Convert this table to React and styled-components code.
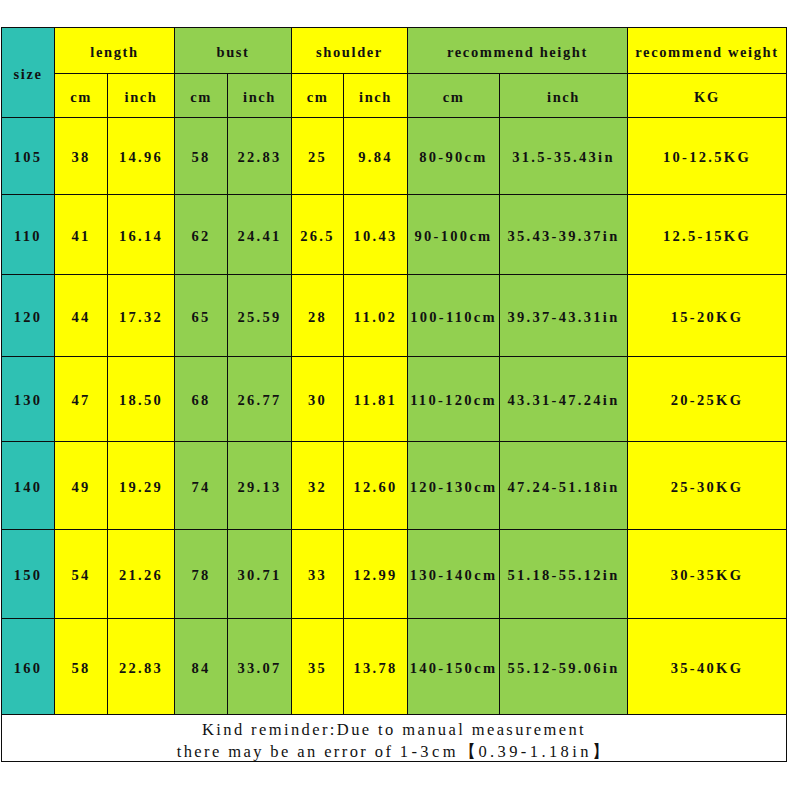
import React from 'react'
import styled, { createGlobalStyle } from 'styled-components'

const GlobalStyle = createGlobalStyle`
  html, body {
    margin: 0;
    padding: 0;
    background: #ffffff;
  }
`

const colors = {
  teal: '#2fc1b3',
  yellow: '#ffff00',
  green: '#92d050',
}

const Page = styled.div`
  width: 788px;
  height: 788px;
  padding: 27px 0 0 1px;
  box-sizing: border-box;
  background: #fff;
`

const Grid = styled.div`
  display: grid;
  width: max-content;
  grid-template-columns: 52px 52px 66px 52px 63px 51px 63px 91px 127px 158px;
  grid-template-rows: 45px 43px 76px 79px 81px 84px 87px 88px 95px 46px;
  gap: 1px;
  padding: 1px;
  background: #0c0c0c;
  font-family: "Liberation Serif", "DejaVu Serif", serif;
  color: #111;
`

const Cell = styled.div`
  display: flex;
  align-items: center;
  justify-content: center;
  background: ${({ $bg }) => colors[$bg]};
  grid-column: span ${({ $span }) => $span || 1};
  grid-row: span ${({ $rows }) => $rows || 1};
  font-size: 14.5px;
  font-weight: bold;
  letter-spacing: ${({ $num }) => ($num ? '2.3px' : '1.6px')};
  white-space: nowrap;
  padding-top: ${({ $rows }) => ($rows ? '4px' : '3px')};
`

const Reminder = styled.div`
  grid-column: span 10;
  background: #fff;
  display: flex;
  flex-direction: column;
  align-items: center;
  justify-content: center;
  padding-top: 5px;
  font-size: 16.5px;
  line-height: 22px;
  letter-spacing: 2.4px;
  color: #111;
`

const Wide = styled.span`
  letter-spacing: 3.4px;
`

const rows = [
  ['105', '38', '14.96', '58', '22.83', '25', '9.84', '80-90cm', '31.5-35.43in', '10-12.5KG'],
  ['110', '41', '16.14', '62', '24.41', '26.5', '10.43', '90-100cm', '35.43-39.37in', '12.5-15KG'],
  ['120', '44', '17.32', '65', '25.59', '28', '11.02', '100-110cm', '39.37-43.31in', '15-20KG'],
  ['130', '47', '18.50', '68', '26.77', '30', '11.81', '110-120cm', '43.31-47.24in', '20-25KG'],
  ['140', '49', '19.29', '74', '29.13', '32', '12.60', '120-130cm', '47.24-51.18in', '25-30KG'],
  ['150', '54', '21.26', '78', '30.71', '33', '12.99', '130-140cm', '51.18-55.12in', '30-35KG'],
  ['160', '58', '22.83', '84', '33.07', '35', '13.78', '140-150cm', '55.12-59.06in', '35-40KG'],
]

const columnColors = ['teal', 'yellow', 'yellow', 'green', 'green', 'yellow', 'yellow', 'green', 'green', 'yellow']

export default function App() {
  return (
    <>
      <GlobalStyle />
      <Page>
        <Grid>
          <Cell $bg="teal" $rows={2}>size</Cell>
          <Cell $bg="yellow" $span={2}>length</Cell>
          <Cell $bg="green" $span={2}>bust</Cell>
          <Cell $bg="yellow" $span={2}>shoulder</Cell>
          <Cell $bg="green" $span={2}>recommend height</Cell>
          <Cell $bg="yellow">recommend weight</Cell>

          {['cm', 'inch', 'cm', 'inch', 'cm', 'inch', 'cm', 'inch', 'KG'].map((label, i) => (
            <Cell key={i} $bg={columnColors[i + 1]}>{label}</Cell>
          ))}

          {rows.map((row) =>
            row.map((value, i) => (
              <Cell key={row[0] + '-' + i} $bg={columnColors[i]} $num>{value}</Cell>
            ))
          )}

          <Reminder>
            <span>Kind reminder:Due to manual measurement</span>
            <span>there may be an error of <Wide>1-3cm</Wide>【<Wide>0.39-1.18in</Wide>】</span>
          </Reminder>
        </Grid>
      </Page>
    </>
  )
}
